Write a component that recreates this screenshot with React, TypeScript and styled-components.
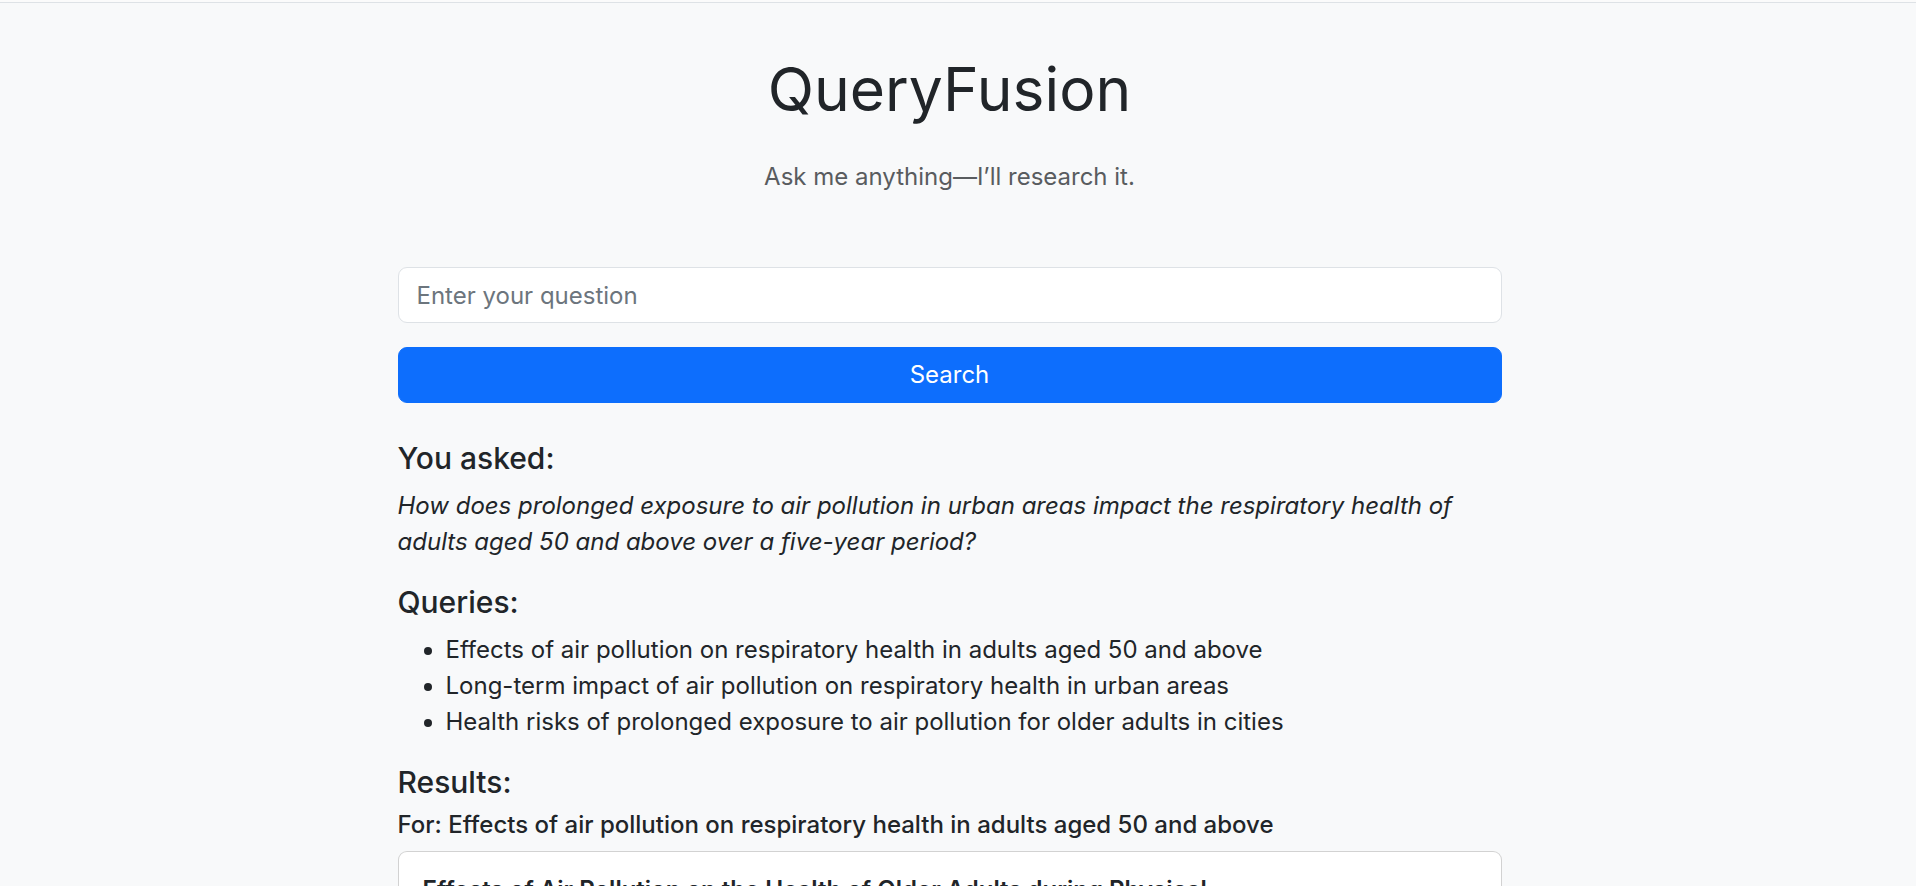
import React from "react";
import styled, { createGlobalStyle } from "styled-components";

const GlobalStyle = createGlobalStyle`
  *, *::before, *::after { box-sizing: border-box; }
  html, body { margin: 0; padding: 0; }
  body {
    background: #f8f9fa;
    color: #212529;
    font-family: Inter, "Noto Sans", "Liberation Sans", sans-serif;
    font-size: 24px;
    line-height: 1.5;
  }
`;

const TopRule = styled.div`
  height: 3px;
  background: #fbfbfb;
  border-bottom: 1px solid #dee2e6;
`;

const Page = styled.div`
  padding-right: 17px;
`;

const Container = styled.main`
  max-width: 1104px;
  margin: 0 auto;
  padding-bottom: 48px;
`;

const Header = styled.header`
  text-align: center;
  padding-top: 49.5px;
`;

const Title = styled.h1`
  margin: 0 0 34px;
  font-size: 60.5px;
  font-weight: 400;
  line-height: 1.2;
`;

const Tagline = styled.p`
  margin: 0 0 72px;
  color: #595c5f;
`;

const SearchForm = styled.form`
  display: flex;
  flex-direction: column;
  gap: 24px;
`;

const QuestionInput = styled.input`
  display: block;
  width: 100%;
  height: 56px;
  padding: 9px 18px;
  font: inherit;
  color: #212529;
  background: #fff;
  border: 1px solid #dee2e6;
  border-radius: 9px;
  outline: none;
  &::placeholder { color: #6c757d; opacity: 1; }
`;

const SearchButton = styled.button`
  display: block;
  width: 100%;
  height: 56px;
  font: inherit;
  color: #fff;
  background: #0d6efd;
  border: 1px solid #0d6efd;
  border-radius: 9px;
  cursor: pointer;
`;

const Section = styled.section`
  margin-top: 37px;
`;

const SectionHeading = styled.h5<{ $tight?: boolean }>`
  margin: 0 0 ${(p) => (p.$tight ? 11 : 12)}px;
  font-size: 30px;
  font-weight: 500;
  line-height: 1.2;
`;

const Question = styled.p`
  margin: 0 0 24px;
  font-style: italic;
`;

const QueryList = styled.ul`
  margin: 0 0 24px;
  padding-left: 48px;
`;

const QueryFor = styled.h6`
  margin: 0 0 11px;
  font-size: 24px;
  font-weight: 500;
  line-height: 1.2;
`;

const Group = styled.div`
  margin-bottom: 24px;
`;

const Card = styled.article`
  background: #fff;
  border: 1px solid rgba(0, 0, 0, 0.175);
  border-radius: 9px;
  padding: 24px;
  margin-bottom: 24px;
`;

const CardTitle = styled.h5`
  margin: 0 0 12px;
  font-size: 24px;
  font-weight: 600;
  line-height: 1.2;
`;

const CardText = styled.p`
  margin: 0 0 12px;
  color: #495057;
`;

const CardLink = styled.a`
  color: #0d6efd;
  text-decoration: underline;
`;

const queries = [
  "Effects of air pollution on respiratory health in adults aged 50 and above",
  "Long-term impact of air pollution on respiratory health in urban areas",
  "Health risks of prolonged exposure to air pollution for older adults in cities",
];

const results: { title: string; text: string; url: string }[][] = [
  [
    {
      title: "Effects of Air Pollution on the Health of Older Adults during Physical...",
      text: "Older adults are particularly vulnerable to air pollution, and exposure during physical activity can worsen lung function and increase respiratory symptoms.",
      url: "https://www.ncbi.nlm.nih.gov/pmc/articles/",
    },
    {
      title: "Air pollution and respiratory health in older adults",
      text: "Long-term exposure to fine particulate matter is associated with accelerated lung function decline and a higher incidence of COPD in adults over 50.",
      url: "https://www.thelancet.com/",
    },
    {
      title: "Ambient air pollution and chronic respiratory disease",
      text: "Cohort studies show increased hospital admissions for respiratory disease among older adults living in areas with elevated NO2 and PM2.5 levels.",
      url: "https://www.who.int/",
    },
  ],
  [
    {
      title: "Long-term exposure to urban air pollution and lung function",
      text: "A five-year follow-up of urban residents found measurable declines in FEV1 associated with traffic-related pollution exposure.",
      url: "https://www.atsjournals.org/",
    },
    {
      title: "Urban air quality and respiratory outcomes",
      text: "Persistent exposure to ozone and particulate matter in cities contributes to asthma, bronchitis and reduced lung capacity over time.",
      url: "https://www.epa.gov/",
    },
    {
      title: "Traffic pollution and respiratory health in cities",
      text: "Living close to major roads is linked with increased respiratory symptoms and faster progression of chronic lung disease.",
      url: "https://www.bmj.com/",
    },
  ],
  [
    {
      title: "Health risks of air pollution for older people",
      text: "Older adults in cities face elevated risks of respiratory infections, COPD exacerbations and cardiovascular events due to polluted air.",
      url: "https://www.nature.com/",
    },
    {
      title: "Air pollution, ageing and lung health",
      text: "Age-related changes in the lungs increase susceptibility to pollutants, making prolonged exposure particularly harmful after age 50.",
      url: "https://erj.ersjournals.com/",
    },
    {
      title: "Protecting older adults from urban air pollution",
      text: "Reducing exposure through air quality alerts, indoor filtration and urban planning can lower respiratory health risks for seniors.",
      url: "https://www.cdc.gov/",
    },
  ],
];

export default function App() {
  return (
    <>
      <GlobalStyle />
      <TopRule />
      <Page>
        <Container>
          <Header>
            <Title>QueryFusion</Title>
            <Tagline>Ask me anything—I’ll research it.</Tagline>
          </Header>
          <SearchForm onSubmit={(e) => e.preventDefault()}>
            <QuestionInput type="text" placeholder="Enter your question" />
            <SearchButton type="submit">Search</SearchButton>
          </SearchForm>
          <Section>
            <SectionHeading>You asked:</SectionHeading>
            <Question>
              How does prolonged exposure to air pollution in urban areas impact the respiratory health of
              adults aged 50 and above over a five-year period?
            </Question>
            <SectionHeading>Queries:</SectionHeading>
            <QueryList>
              {queries.map((q) => (
                <li key={q}>{q}</li>
              ))}
            </QueryList>
            <SectionHeading $tight>Results:</SectionHeading>
            {queries.map((q, i) => (
              <Group key={q}>
                <QueryFor>For: {q}</QueryFor>
                {results[i].map((r) => (
                  <Card key={r.title}>
                    <CardTitle>{r.title}</CardTitle>
                    <CardText>{r.text}</CardText>
                    <CardLink href={r.url}>{r.url}</CardLink>
                  </Card>
                ))}
              </Group>
            ))}
          </Section>
        </Container>
      </Page>
    </>
  );
}
